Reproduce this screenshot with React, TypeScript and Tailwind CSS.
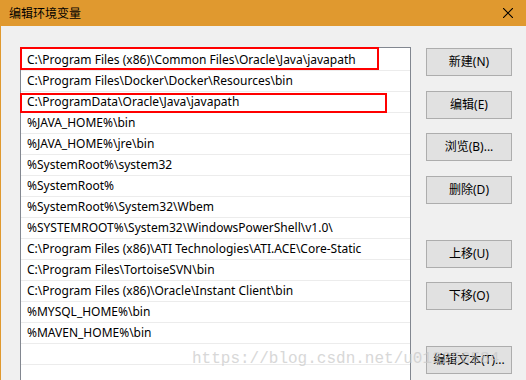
const paths = [
  'C:\\Program Files (x86)\\Common Files\\Oracle\\Java\\javapath',
  'C:\\Program Files\\Docker\\Docker\\Resources\\bin',
  'C:\\ProgramData\\Oracle\\Java\\javapath',
  '%JAVA_HOME%\\bin',
  '%JAVA_HOME%\\jre\\bin',
  '%SystemRoot%\\system32',
  '%SystemRoot%',
  '%SystemRoot%\\System32\\Wbem',
  '%SYSTEMROOT%\\System32\\WindowsPowerShell\\v1.0\\',
  'C:\\Program Files (x86)\\ATI Technologies\\ATI.ACE\\Core-Static',
  'C:\\Program Files\\TortoiseSVN\\bin',
  'C:\\Program Files (x86)\\Oracle\\Instant Client\\bin',
  '%MYSQL_HOME%\\bin',
  '%MAVEN_HOME%\\bin',
  '',
  '',
];

function Btn({ label, className = '' }: { label: string; className?: string }) {
  return (
    <button className={`h-[28px] w-[86px] bg-[#e1e1e1] border border-[#adadad] text-[12px] text-black ${className}`}>
      {label}
    </button>
  );
}

export default function App() {
  return (
    <div
      className="relative w-[526px] h-[380px] overflow-hidden bg-[#f0f0f0] border-l border-[#e0992f]"
      style={{ fontFamily: '"Noto Sans", "Noto Sans CJK SC", sans-serif' }}
    >
      {/* Title bar */}
      <div className="h-[26px] bg-[#e0992f] flex items-center justify-between pl-[8px] pr-[13px]">
        <span className="text-[12px] text-black" style={{ fontFamily: '"Noto Sans CJK SC", sans-serif' }}>编辑环境变量</span>
        <svg width="10" height="10" viewBox="0 0 10 10">
          <path d="M0 0 L10 10 M10 0 L0 10" stroke="#000" strokeWidth="1.1" />
        </svg>
      </div>

      <div className="flex pl-[19px] pt-[21px] gap-[15px]">
        {/* List */}
        <div className="w-[391px] h-[360px] bg-white border border-[#828790] pt-[2px] shrink-0">
          {paths.map((p, i) => (
            <div
              key={i}
              className="h-[21px] border-b border-[#ececec] pl-[6px] flex items-center text-[12px] text-black whitespace-nowrap"
            >
              {p}
            </div>
          ))}
        </div>

        {/* Buttons */}
        <div className="flex flex-col pt-[1px]">
          <Btn label="新建(N)" />
          <Btn label="编辑(E)" className="mt-[15px]" />
          <Btn label="浏览(B)..." className="mt-[14px]" />
          <Btn label="删除(D)" className="mt-[15px]" />
          <Btn label="上移(U)" className="mt-[36px]" />
          <Btn label="下移(O)" className="mt-[14px]" />
          <Btn label="编辑文本(T)..." className="mt-[36px]" />
        </div>
      </div>

      {/* Annotation boxes */}
      <div className="absolute left-[19px] top-[47px] w-[359px] h-[23px] border-2 border-[#ff0000]" />
      <div className="absolute left-[19px] top-[93px] w-[367px] h-[20px] border-2 border-[#ff0000]" />

      {/* Watermark */}
      <div
        className="absolute left-[191px] top-[349px] text-[16px] leading-[20px] text-[#c8c8c8] opacity-70 pointer-events-none whitespace-nowrap"
        style={{ fontFamily: '"Liberation Mono", monospace' }}
      >
        https://blog.csdn.net/u013256584
      </div>
    </div>
  );
}
